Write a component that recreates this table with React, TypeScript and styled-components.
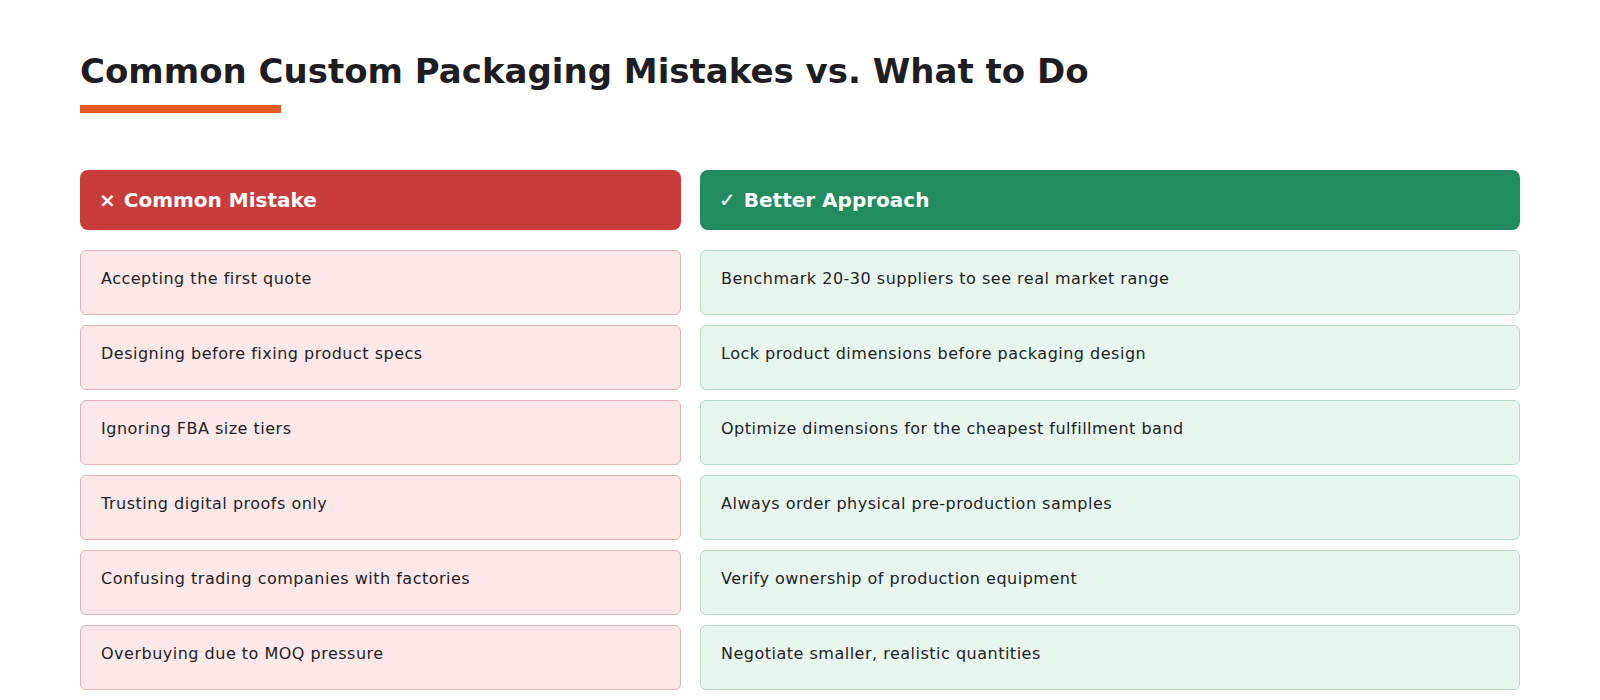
import React from "react";
import styled, { createGlobalStyle } from "styled-components";

const Global = createGlobalStyle`
  html, body { margin: 0; padding: 0; background: #ffffff; }
  body { font-family: "DejaVu Sans", Verdana, sans-serif; color: #1f1f23; }
`;

const Page = styled.div`
  padding: 51px 80px 0 80px;
  box-sizing: border-box;
  width: 1600px;
`;

const Title = styled.h1`
  margin: 0;
  font-size: 34px;
  line-height: 41px;
  font-weight: 700;
  color: #1e1e22;
`;

const Accent = styled.div`
  width: 201px;
  height: 8px;
  background: #e25a26;
  margin-top: 13px;
`;

const Columns = styled.div`
  display: grid;
  grid-template-columns: 601px 1fr;
  column-gap: 19px;
  margin-top: 57px;
`;

const Column = styled.div`
  display: flex;
  flex-direction: column;
  gap: 10px;
`;

const Header = styled.div<{ $tone: "bad" | "good" }>`
  background: ${(p) => (p.$tone === "bad" ? "#c83c3c" : "#228b5f")};
  color: #ffffff;
  border-radius: 8px;
  padding: 18px 20px 18px 19px;
  font-size: 20px;
  line-height: 24px;
  font-weight: 700;
  margin-bottom: 10px;
  display: flex;
  align-items: center;
  gap: 8px;
`;

const Mark = styled.span`
  font-weight: 700;
  font-size: 20px;
`;

const Row = styled.div<{ $tone: "bad" | "good" }>`
  box-sizing: border-box;
  height: 65px;
  padding: 16px 20px;
  border-radius: 6px;
  border: 1px solid ${(p) => (p.$tone === "bad" ? "#e2b2b4" : "#b3dcc4")};
  background: ${(p) => (p.$tone === "bad" ? "#fde8e9" : "#e7f6ef")};
  font-size: 16px;
  line-height: 24px;
  letter-spacing: 0.5px;
  color: #222226;
`;

const mistakes = [
  "Accepting the first quote",
  "Designing before fixing product specs",
  "Ignoring FBA size tiers",
  "Trusting digital proofs only",
  "Confusing trading companies with factories",
  "Overbuying due to MOQ pressure",
];

const better = [
  "Benchmark 20-30 suppliers to see real market range",
  "Lock product dimensions before packaging design",
  "Optimize dimensions for the cheapest fulfillment band",
  "Always order physical pre-production samples",
  "Verify ownership of production equipment",
  "Negotiate smaller, realistic quantities",
];

export default function App() {
  return (
    <>
      <Global />
      <Page>
        <Title>Common Custom Packaging Mistakes vs. What to Do</Title>
        <Accent />
        <Columns>
          <Column>
            <Header $tone="bad">
              <Mark>×</Mark>
              <span>Common Mistake</span>
            </Header>
            {mistakes.map((m) => (
              <Row key={m} $tone="bad">
                {m}
              </Row>
            ))}
          </Column>
          <Column>
            <Header $tone="good">
              <Mark>✓</Mark>
              <span>Better Approach</span>
            </Header>
            {better.map((m) => (
              <Row key={m} $tone="good">
                {m}
              </Row>
            ))}
          </Column>
        </Columns>
      </Page>
    </>
  );
}
